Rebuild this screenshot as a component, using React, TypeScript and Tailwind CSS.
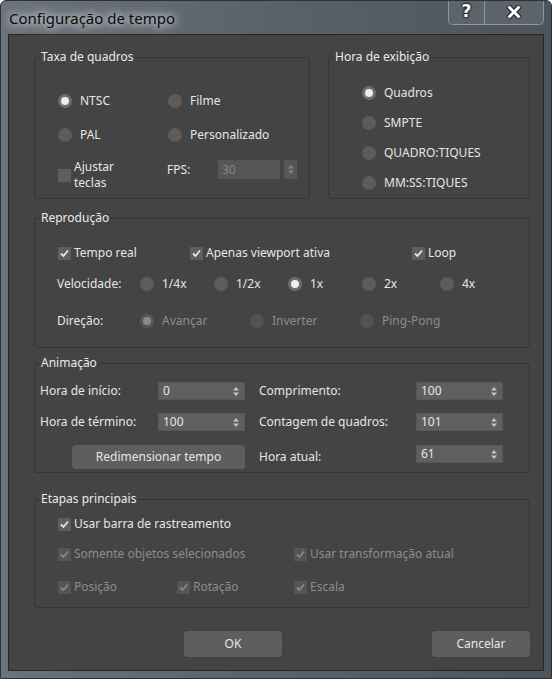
import React from "react";

function Radio({ label, checked, disabled, w }: { label: string; checked?: boolean; disabled?: boolean; w?: string }) {
  let dot = "bg-[#5c5c5c]";
  if (checked && !disabled) dot = "bg-[#eeeeee] border-[3px] border-[#6c6c6c]";
  if (checked && disabled) dot = "bg-[#8a8a8a] border-[3px] border-[#575757]";
  if (!checked && disabled) dot = "bg-[#535353]";
  return (
    <div className={`flex items-center gap-[8px] h-[20px] ${w ?? ""}`}>
      <span className={`w-[14px] h-[14px] rounded-full shrink-0 ${dot}`} />
      <span className={disabled ? "text-[#8c8c8c]" : "text-[#e6e6e6]"}>{label}</span>
    </div>
  );
}

function Check({ label, checked, disabled, w }: { label: React.ReactNode; checked?: boolean; disabled?: boolean; w?: string }) {
  return (
    <div className={`flex items-center gap-[3px] min-h-[20px] ${w ?? ""}`}>
      <span className={`w-[13px] h-[13px] shrink-0 flex items-center justify-center ${disabled ? "bg-[#555555]" : "bg-[#5e5e5e]"}`}>
        {checked && (
          <svg width="9" height="9" viewBox="0 0 9 9">
            <path d="M1 4.5 L3.5 7 L8 1.5" fill="none" stroke={disabled ? "#8a8a8a" : "#e8e8e8"} strokeWidth="1.8" />
          </svg>
        )}
      </span>
      <span className={disabled ? "text-[#8c8c8c]" : "text-[#e6e6e6]"}>{label}</span>
    </div>
  );
}

function Arrows({ color }: { color: string }) {
  return (
    <svg width="6" height="9" viewBox="0 0 6 9">
      <path d="M0 3.5 L3 0 L6 3.5 Z" fill={color} />
      <path d="M0 5.5 L3 9 L6 5.5 Z" fill={color} />
    </svg>
  );
}

function Spinner({ value, w }: { value: string; w: string }) {
  return (
    <div className={`h-[18px] ${w} bg-[#5f5f5f] border border-[#575757] flex items-center pl-[4px] pr-[5px] text-[#e6e6e6]`}>
      <span className="flex-1">{value}</span>
      <Arrows color="#c4c4c4" />
    </div>
  );
}

function Group({ title, className, children }: { title: string; className: string; children: React.ReactNode }) {
  return (
    <fieldset className={`border border-[#363636] rounded-[3px] min-w-0 ${className}`}>
      <legend className="ml-[5px] px-[1px] leading-[14px] text-[#ebebeb]">{title}</legend>
      {children}
    </fieldset>
  );
}

export default function App() {
  return (
    <div className="w-[552px] h-[679px] flex flex-col bg-gradient-to-r from-[#6b727a] via-[#5a6169] to-[#4d545c] rounded-t-[6px] border border-[#2c3136] overflow-hidden font-['Noto_Sans',sans-serif] text-[12px]">
      {/* title bar */}
      <div className="h-[33px] flex shrink-0 relative">
        <div className="pl-[8px] pt-[6px] text-[15px] text-[#0a0a0a] [text-shadow:0_0_6px_#c9ced3,0_0_10px_#c9ced3,0_0_14px_#aeb4ba]">
          Configuração de tempo
        </div>
        <div className="ml-auto mr-[7px] flex h-[25px] -mt-px border border-[#8f969d] border-t-0 rounded-b-[5px] bg-[#5c636b] overflow-hidden">
          <div className="w-[36px] flex items-center justify-center border-r border-[#8f969d] text-white font-bold text-[17px] font-['DejaVu_Sans',sans-serif] [text-shadow:0_0_2px_#000,0_0_3px_#000]">
            ?
          </div>
          <div className="w-[58px] flex items-center justify-center">
            <svg width="16" height="14" viewBox="0 0 16 14">
              <path d="M2 1 L14 13 M14 1 L2 13" stroke="#1c1f22" strokeWidth="5" />
              <path d="M2.5 1.5 L13.5 12.5 M13.5 1.5 L2.5 12.5" stroke="#ffffff" strokeWidth="3" />
            </svg>
          </div>
        </div>
      </div>

      {/* client area */}
      <div className="mx-[7px] h-[637px] bg-[#444444] border border-[#262626] pt-[15px] pl-[25px] pr-[13px] flex flex-col">
        <div className="flex gap-[18px]">
          <Group title="Taxa de quadros" className="w-[276px] h-[149px]">
            <div className="pl-[23px] pt-[27px]">
              <div className="flex">
                <Radio label="NTSC" checked w="w-[110px]" />
                <Radio label="Filme" />
              </div>
              <div className="flex mt-[14px]">
                <Radio label="PAL" w="w-[110px]" />
                <Radio label="Personalizado" />
              </div>
              <div className="flex mt-[14px] items-start">
                <div className="w-[109px]">
                  <Check label={<span className="block leading-[16px]">Ajustar<br />teclas</span>} />
                </div>
                <div className="flex items-center h-[19px] mt-px">
                  <span className="w-[51px] text-[#e6e6e6]">FPS:</span>
                  <div className="h-[19px] w-[62px] bg-[#565656] pl-[4px] flex items-center text-[#858585]">30</div>
                  <div className="h-[19px] w-[13px] ml-[4px] bg-[#565656] flex items-center justify-center">
                    <Arrows color="#858585" />
                  </div>
                </div>
              </div>
            </div>
          </Group>
          <Group title="Hora de exibição" className="w-[202px] h-[149px]">
            <div className="pl-[33px] pt-[19px] flex flex-col gap-[10px]">
              <Radio label="Quadros" checked />
              <Radio label="SMPTE" />
              <Radio label="QUADRO:TIQUES" />
              <Radio label="MM:SS:TIQUES" />
            </div>
          </Group>
        </div>

        <Group title="Reprodução" className="mt-[12px] h-[137px]">
          <div className="pt-[18px]">
            <div className="flex pl-[23px]">
              <Check label="Tempo real" checked w="w-[132px]" />
              <Check label="Apenas viewport ativa" checked w="w-[222px]" />
              <Check label="Loop" checked />
            </div>
            <div className="flex items-center pl-[22px] mt-[11px]">
              <span className="w-[83px] text-[#e6e6e6]">Velocidade:</span>
              <Radio label="1/4x" w="w-[74px]" />
              <Radio label="1/2x" w="w-[74px]" />
              <Radio label="1x" checked w="w-[74px]" />
              <Radio label="2x" w="w-[78px]" />
              <Radio label="4x" />
            </div>
            <div className="flex items-center pl-[22px] mt-[17px]">
              <span className="w-[83px] text-[#e6e6e6]">Direção:</span>
              <Radio label="Avançar" checked disabled w="w-[110px]" />
              <Radio label="Inverter" disabled w="w-[110px]" />
              <Radio label="Ping-Pong" disabled />
            </div>
          </div>
        </Group>

        <Group title="Animação" className="mt-[8px] h-[117px]">
          <div className="pl-[5px] pt-[12px] text-[#e6e6e6]">
            <div className="flex items-center h-[18px]">
              <span className="w-[118px]">Hora de início:</span>
              <Spinner value="0" w="w-[87px]" />
              <span className="ml-[14px] w-[157px]">Comprimento:</span>
              <Spinner value="100" w="w-[87px]" />
            </div>
            <div className="flex items-center h-[18px] mt-[13px]">
              <span className="w-[118px]">Hora de término:</span>
              <Spinner value="100" w="w-[87px]" />
              <span className="ml-[14px] w-[157px]">Contagem de quadros:</span>
              <Spinner value="101" w="w-[87px]" />
            </div>
            <div className="flex items-start mt-[14px]">
              <button className="ml-[32px] w-[173px] h-[24px] bg-[#5e5e5e] rounded-[4px] text-[#e6e6e6]">
                Redimensionar tempo
              </button>
              <span className="ml-[14px] w-[157px] h-[24px] flex items-center">Hora atual:</span>
              <Spinner value="61" w="w-[87px]" />
            </div>
          </div>
        </Group>

        <Group title="Etapas principais" className="mt-[19px] h-[116px]">
          <div className="pl-[23px] pt-[8px]">
            <Check label="Usar barra de rastreamento" checked />
            <div className="flex mt-[10px]">
              <Check label="Somente objetos selecionados" checked disabled w="w-[236px]" />
              <Check label="Usar transformação atual" checked disabled />
            </div>
            <div className="flex mt-[13px]">
              <Check label="Posição" checked disabled w="w-[119px]" />
              <Check label="Rotação" checked disabled w="w-[117px]" />
              <Check label="Escala" checked disabled />
            </div>
          </div>
        </Group>

        <div className="flex mt-[23px]">
          <button className="ml-[150px] w-[98px] h-[26px] bg-[#5e5e5e] rounded-[4px] text-[#e6e6e6]">OK</button>
          <button className="ml-auto w-[98px] h-[26px] bg-[#5e5e5e] rounded-[4px] text-[#e6e6e6]">Cancelar</button>
        </div>
      </div>
    </div>
  );
}
